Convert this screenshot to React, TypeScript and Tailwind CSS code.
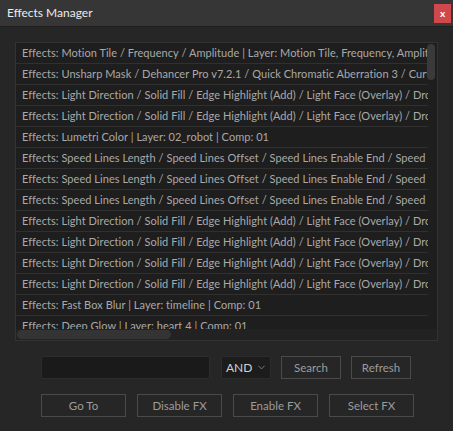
import { ChevronDown } from "lucide-react";

const rows = [
  "Effects: Motion Tile / Frequency / Amplitude | Layer: Motion Tile, Frequency, Amplitude | Comp: 01",
  "Effects: Unsharp Mask / Dehancer Pro v7.2.1 / Quick Chromatic Aberration 3 / Curves | Layer: grade | Comp: 01",
  "Effects: Light Direction / Solid Fill / Edge Highlight (Add) / Light Face (Overlay) / Drop Shadow",
  "Effects: Light Direction / Solid Fill / Edge Highlight (Add) / Light Face (Overlay) / Drop Shadow",
  "Effects: Lumetri Color | Layer: 02_robot | Comp: 01",
  "Effects: Speed Lines Length / Speed Lines Offset / Speed Lines Enable End / Speed Lines Enable Start",
  "Effects: Speed Lines Length / Speed Lines Offset / Speed Lines Enable End / Speed Lines Enable Start",
  "Effects: Speed Lines Length / Speed Lines Offset / Speed Lines Enable End / Speed Lines Enable Start",
  "Effects: Light Direction / Solid Fill / Edge Highlight (Add) / Light Face (Overlay) / Drop Shadow",
  "Effects: Light Direction / Solid Fill / Edge Highlight (Add) / Light Face (Overlay) / Drop Shadow",
  "Effects: Light Direction / Solid Fill / Edge Highlight (Add) / Light Face (Overlay) / Drop Shadow",
  "Effects: Light Direction / Solid Fill / Edge Highlight (Add) / Light Face (Overlay) / Drop Shadow",
  "Effects: Fast Box Blur | Layer: timeline | Comp: 01",
  "Effects: Deep Glow | Layer: heart 4 | Comp: 01",
];

function Btn({ label, w }: { label: string; w: string }) {
  return (
    <button
      className={`${w} h-[23px] border border-[#4a4a4a] bg-[#262626] text-[11.5px] text-[#9c9c9c] flex items-center justify-center`}
    >
      {label}
    </button>
  );
}

export default function App() {
  return (
    <div
      className="w-[453px] h-[431px] bg-[#262626] flex flex-col overflow-hidden"
      style={{ fontFamily: 'Lato, "Noto Sans", sans-serif' }}
    >
      {/* title bar */}
      <div className="h-[27px] bg-[#363636] border-b border-[#1e1e1e] flex items-center justify-between pl-[7px] pr-[2px]">
        <span className="text-[12px] text-[#ececec]">Effects Manager</span>
        <div className="w-[17px] h-[19px] bg-[#d0484c] flex items-center justify-center text-white text-[10px] font-bold leading-none">
          x
        </div>
      </div>

      {/* list */}
      <div className="mt-[15px] ml-[15px] w-[423px] h-[299px] border border-[#333333] bg-[#1e1e1e] relative overflow-hidden">
        <div className="w-[412px] overflow-hidden">
          {rows.map((r, i) => (
            <div
              key={i}
              className="h-[21px] border-b border-[#303030] pl-[6px] pt-[1px] flex items-center whitespace-nowrap text-[11px] tracking-[0.05px] text-[#a9a9a9]"
            >
              {r}
            </div>
          ))}
        </div>
        {/* vertical scrollbar */}
        <div className="absolute right-[2px] top-[1px] w-[8px] h-[36px] rounded-full bg-[#3a3a3a]" />
        {/* horizontal scrollbar */}
        <div className="absolute left-0 bottom-0 w-full h-[11px] bg-[#222222]">
          <div className="ml-[1px] mt-[1px] w-[154px] h-[9px] rounded-full bg-[#343434]" />
        </div>
      </div>

      {/* search row */}
      <div className="mt-[15px] ml-[41px] flex items-center h-[23px]">
        <div className="w-[169px] h-[23px] bg-[#1a1a1a] border border-[#2c2c2c] rounded-[2px]" />
        <div className="ml-[11px] w-[50px] h-[23px] bg-[#1c1c1c] border border-[#2c2c2c] rounded-[2px] flex items-center pl-[4px] gap-[4px] text-[12px] text-[#d0d0d0]">
          AND
          <ChevronDown className="w-[11px] h-[11px] text-[#a0a0a0]" strokeWidth={1.5} />
        </div>
        <div className="ml-[10px]">
          <Btn label="Search" w="w-[60px]" />
        </div>
        <div className="ml-[10px]">
          <Btn label="Refresh" w="w-[60px]" />
        </div>
      </div>

      {/* action row */}
      <div className="mt-[15px] ml-[41px] flex gap-[11px]">
        <Btn label="Go To" w="w-[85px]" />
        <Btn label="Disable FX" w="w-[85px]" />
        <Btn label="Enable FX" w="w-[85px]" />
        <Btn label="Select FX" w="w-[85px]" />
      </div>
    </div>
  );
}
